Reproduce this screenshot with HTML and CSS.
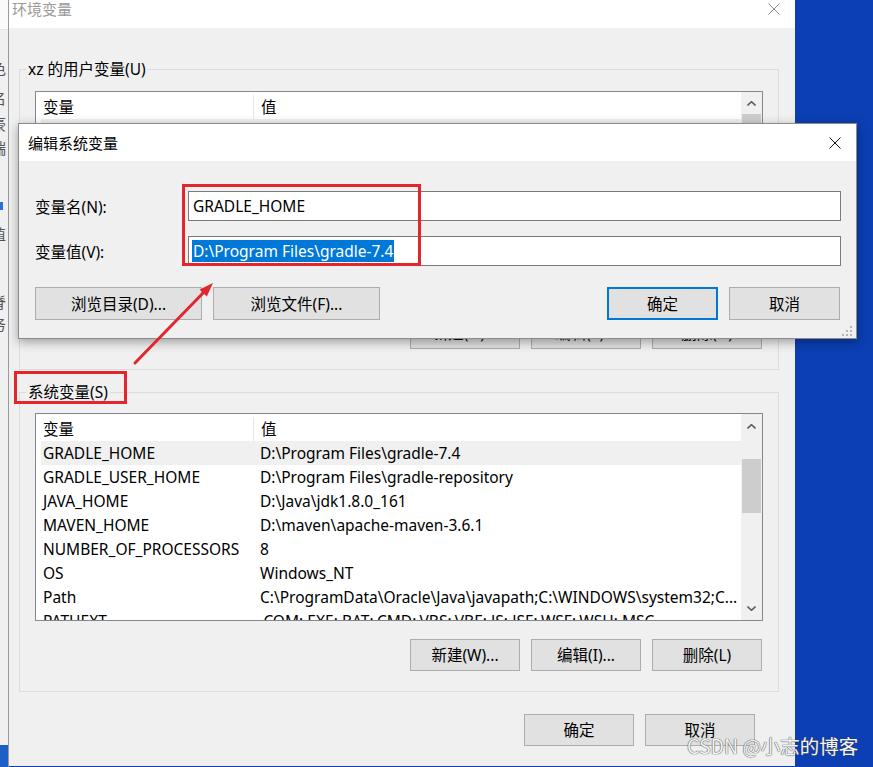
FILE: index.html
```html
<!DOCTYPE html>
<html lang="zh-CN">
<head>
<meta charset="utf-8">
<title>环境变量</title>
<link rel="stylesheet" href="styles.css">
</head>
<body>
<div class="screen">
  <div class="behind">
    <div class="behind-top"></div>
    <span class="frag fr1">色</span>
    <span class="frag fr2">名</span>
    <span class="frag fr3">豪</span>
    <span class="frag fr4">瑞</span>
    <span class="frag-blue"></span>
    <span class="frag fr5">值</span>
    <span class="frag fr6">脊</span>
    <span class="frag fr7">务</span>
    <div class="behind-fill"></div>
    <div class="behind-blue"></div>
  </div>

  <div class="envwin">
    <div class="titlebar">
      <span class="title">环境变量</span>
      <svg class="close-x gray" width="12" height="12" viewBox="0 0 12 12"><path d="M0.5 0.5 L11.5 11.5 M11.5 0.5 L0.5 11.5"/></svg>
    </div>
    <div class="winbody">
      <fieldset class="group">
        <legend>xz 的用户变量(U)</legend>
        <div class="listview">
          <div class="lv-main">
            <div class="lv-head"><span class="c1">变量</span><span class="c2">值</span></div>
            <div class="lv-row sel"><span class="c1">OneDrive</span><span class="c2">C:\Users\xz\OneDrive</span></div>
            <div class="lv-row"><span class="c1">Path</span><span class="c2">C:\Users\xz\AppData\Local\Microsoft\WindowsApps;</span></div>
            <div class="lv-row"><span class="c1">TEMP</span><span class="c2">C:\Users\xz\AppData\Local\Temp</span></div>
            <div class="lv-row"><span class="c1">TMP</span><span class="c2">C:\Users\xz\AppData\Local\Temp</span></div>
          </div>
          <div class="lv-scroll">
            <div class="sb-arrow up-user"><svg width="9" height="5" viewBox="0 0 9 5"><polyline points="0.5,4.5 4.5,0.7 8.5,4.5"/></svg></div>
            <div class="sb-thumb user-thumb"></div>
            <div class="sb-space"></div>
            <div class="sb-arrow"><svg width="9" height="5" viewBox="0 0 9 5"><polyline points="0.5,0.5 4.5,4.3 8.5,0.5"/></svg></div>
          </div>
        </div>
        <div class="btnrow">
          <button class="btn">新建(N)...</button>
          <button class="btn">编辑(E)...</button>
          <button class="btn">删除(D)</button>
        </div>
      </fieldset>

      <fieldset class="group sys">
        <legend>系统变量(S)</legend>
        <div class="listview">
          <div class="lv-main">
            <div class="lv-head"><span class="c1">变量</span><span class="c2">值</span></div>
            <div class="lv-row sel"><span class="c1">GRADLE_HOME</span><span class="c2">D:\Program Files\gradle-7.4</span></div>
            <div class="lv-row"><span class="c1">GRADLE_USER_HOME</span><span class="c2">D:\Program Files\gradle-repository</span></div>
            <div class="lv-row"><span class="c1">JAVA_HOME</span><span class="c2">D:\Java\jdk1.8.0_161</span></div>
            <div class="lv-row"><span class="c1">MAVEN_HOME</span><span class="c2">D:\maven\apache-maven-3.6.1</span></div>
            <div class="lv-row"><span class="c1">NUMBER_OF_PROCESSORS</span><span class="c2">8</span></div>
            <div class="lv-row"><span class="c1">OS</span><span class="c2">Windows_NT</span></div>
            <div class="lv-row"><span class="c1">Path</span><span class="c2">C:\ProgramData\Oracle\Java\javapath;C:\WINDOWS\system32;C...</span></div>
            <div class="lv-row"><span class="c1">PATHEXT</span><span class="c2">.COM;.EXE;.BAT;.CMD;.VBS;.VBE;.JS;.JSE;.WSF;.WSH;.MSC</span></div>
          </div>
          <div class="lv-scroll">
            <div class="sb-arrow"><svg width="9" height="5" viewBox="0 0 9 5"><polyline points="0.5,4.5 4.5,0.7 8.5,4.5"/></svg></div>
            <div class="sb-thumb sys-thumb"></div>
            <div class="sb-space"></div>
            <div class="sb-arrow"><svg width="9" height="5" viewBox="0 0 9 5"><polyline points="0.5,0.5 4.5,4.3 8.5,0.5"/></svg></div>
          </div>
        </div>
        <div class="btnrow">
          <button class="btn">新建(W)...</button>
          <button class="btn">编辑(I)...</button>
          <button class="btn">删除(L)</button>
        </div>
      </fieldset>

      <div class="footer">
        <button class="btn">确定</button>
        <button class="btn">取消</button>
      </div>
    </div>
  </div>

  <div class="desktop"></div>
</div>

<div class="dialog">
  <div class="dlg-title">
    <span>编辑系统变量</span>
    <svg class="close-x" width="12" height="12" viewBox="0 0 12 12"><path d="M0.5 0.5 L11.5 11.5 M11.5 0.5 L0.5 11.5"/></svg>
  </div>
  <div class="dlg-body">
    <div class="field">
      <label class="field-label">变量名(N):</label>
      <div class="input">GRADLE_HOME</div>
    </div>
    <div class="field second">
      <label class="field-label">变量值(V):</label>
      <div class="input"><span class="selected">D:\Program Files\gradle-7.4</span></div>
    </div>
    <div class="dlg-buttons">
      <button class="btn wide">浏览目录(D)...</button>
      <button class="btn wide">浏览文件(F)...</button>
      <div class="spacer"></div>
      <button class="btn mid default">确定</button>
      <button class="btn mid">取消</button>
    </div>
  </div>
  <svg class="grip" width="12" height="12" viewBox="0 0 12 12">
    <rect x="9" y="1" width="2" height="2"/>
    <rect x="5" y="5" width="2" height="2"/>
    <rect x="9" y="5" width="2" height="2"/>
    <rect x="1" y="9" width="2" height="2"/>
    <rect x="5" y="9" width="2" height="2"/>
    <rect x="9" y="9" width="2" height="2"/>
  </svg>
</div>

<div class="redbox box-input"></div>
<div class="redbox box-label"></div>
<svg class="arrow" width="110" height="110" viewBox="0 0 110 110">
  <line x1="15" y1="93" x2="84" y2="22"/>
  <polygon points="93,13 86.8,26.5 79.6,19.5"/>
</svg>

<div class="watermark">CSDN @小志的博客</div>
</body>
</html>
```

FILE: styles.css
```css
* { box-sizing: border-box; }

html, body {
  margin: 0;
  padding: 0;
}

body {
  width: 873px;
  height: 767px;
  overflow: hidden;
  position: relative;
  font-family: "Noto Sans", "Noto Sans CJK SC", sans-serif;
  font-size: 15.5px;
  color: #000;
  background: #0b3fb3;
}

.screen {
  display: flex;
  width: 873px;
  height: 767px;
  overflow: hidden;
  background: #0b3fb3;
}

/* sliver of another window at the far left */
.behind {
  width: 9px;
  flex: none;
  display: flex;
  flex-direction: column;
  overflow: hidden;
  background: #f0f0f0;
  border-right: 1px solid #9a9a9a;
}
.behind-top { height: 30px; background: #fafafa; border-bottom: 1px solid #e3e3e3; flex: none; }
.frag {
  display: block;
  flex: none;
  margin-left: -9px;
  font-family: "Noto Sans CJK SC", sans-serif;
  font-size: 15px;
  line-height: 20px;
  color: #555;
}
.fr1 { margin-top: 28px; }
.fr2 { margin-top: 10px; }
.fr3 { margin-top: 6px; }
.fr4 { margin-top: 4px; }
.frag-blue { display: block; flex: none; width: 3px; height: 8px; margin-top: 44px; background: #2d6fd2; }
.fr5 { margin-top: 14px; }
.fr6 { margin-top: 48px; }
.fr7 { margin-top: 2px; }
.behind-fill { flex: 1; }
.behind-blue { height: 22px; flex: none; background: #1c5fc6; }

/* main window */
.envwin {
  width: 786px;
  height: 766px;
  flex: none;
  display: flex;
  flex-direction: column;
  background: #f0f0f0;
}

.titlebar {
  height: 28px;
  flex: none;
  background: #fff;
  display: flex;
  justify-content: space-between;
  align-items: flex-start;
  padding: 0 15px 0 3px;
}
.title {
  font-family: "Noto Sans CJK SC", sans-serif;
  font-size: 15px;
  line-height: 18px;
  color: #9a9a9a;
}
.close-x { margin-top: 3px; }
.close-x path { stroke: #111; stroke-width: 1; fill: none; }
.close-x.gray path { stroke: #8a8a8a; }

.winbody {
  flex: 1;
  padding: 31px 16px 0 10px;
}

.group {
  margin: 0;
  min-width: 0;
  border: 1px solid #dcdcdc;
  padding: 0 15px 20px 15px;
}
.group legend {
  margin-left: -9px;
  padding: 0 2px;
  line-height: 20px;
}
.group.sys { margin-top: 12px; }

.listview {
  display: flex;
  height: 208px;
  margin-top: 12px;
  border: 1px solid #828790;
  background: #fff;
  overflow: hidden;
}
.sys .listview { margin-top: 11px; }

.lv-main {
  flex: 1;
  min-width: 0;
  overflow: hidden;
}
.lv-head {
  display: flex;
  height: 27px;
  padding-top: 3px;
  align-items: center;
}
.lv-head .c1 { border-right: 1px solid #e5e5e5; height: 24px; }
.lv-row {
  display: flex;
  height: 24px;
  align-items: center;
  white-space: nowrap;
}
.c1 {
  width: 218px;
  flex: none;
  padding-left: 7px;
  line-height: 24px;
  white-space: nowrap;
  overflow: hidden;
}
.c2 {
  padding-left: 7px;
  line-height: 24px;
  white-space: nowrap;
}
.lv-row .c2 { padding-left: 6px; }
.lv-row.sel { background: #f0f0f0; margin-left: 5px; }
.lv-row.sel .c1 { width: 213px; padding-left: 2px; }

.lv-scroll {
  width: 21px;
  flex: none;
  display: flex;
  flex-direction: column;
  background: #f0f0f0;
}
.sb-arrow {
  height: 24px;
  flex: none;
  display: flex;
  align-items: center;
  justify-content: center;
}
.sb-arrow polyline { fill: none; stroke: #606060; stroke-width: 1.6; }
.sb-thumb { flex: none; margin: 0 1px; background: #cdcdcd; }
.up-user { height: 22px; }
.user-thumb { height: 54px; }
.sys-thumb { margin-top: 21px; height: 54px; }
.sb-space { flex: 1; }

.btnrow {
  display: flex;
  justify-content: flex-end;
  gap: 11px;
  margin-top: 18px;
  padding-right: 1px;
}

.btn {
  width: 110px;
  height: 32px;
  margin: 0;
  padding: 0;
  border: 1px solid #adadad;
  background: #e1e1e1;
  font-family: "Noto Sans", "Noto Sans CJK SC", sans-serif;
  font-size: 15.5px;
  color: #000;
  line-height: 28px;
}

.footer {
  display: flex;
  justify-content: flex-end;
  gap: 11px;
  margin-top: 22px;
  padding-right: 24px;
}

.desktop {
  flex: 1;
  background: #0b3fb3;
}

/* edit dialog on top */
.dialog {
  position: absolute;
  left: 18px;
  top: 123px;
  width: 839px;
  height: 216px;
  border: 1px solid #8c8c8c;
  background: #f0f0f0;
  box-shadow: 0 3px 10px rgba(0, 0, 0, 0.35);
  display: flex;
  flex-direction: column;
}
.dlg-title {
  height: 37px;
  flex: none;
  background: #fff;
  display: flex;
  align-items: center;
  justify-content: space-between;
  padding: 0 15px 0 9px;
  font-family: "Noto Sans CJK SC", sans-serif;
  font-size: 15px;
}
.dlg-title .close-x { margin-top: 0; }

.dlg-body {
  padding: 30px 15px 0 16px;
}
.field {
  display: flex;
  align-items: center;
  height: 30px;
}
.field.second { margin-top: 15px; }
.field-label {
  width: 153px;
  flex: none;
}
.input {
  flex: 1;
  height: 30px;
  border: 1px solid #7a7a7a;
  background: #fff;
  padding-left: 4px;
  display: flex;
  align-items: center;
  white-space: nowrap;
}
.selected {
  background: #0078d7;
  color: #fff;
  line-height: 22px;
  margin-left: -1px;
  padding: 0 1px;
}

.dlg-buttons {
  display: flex;
  gap: 11px;
  margin-top: 21px;
  padding-right: 1px;
}
.dlg-buttons .spacer { flex: 1; }
.btn.wide { width: 167px; height: 33px; }
.btn.mid { width: 111px; height: 33px; }
.btn.default { border: 2px solid #0078d7; }

.grip {
  position: absolute;
  right: 3px;
  bottom: 1px;
}
.grip rect { fill: #b5b5b5; }

/* annotation overlays */
.redbox {
  position: absolute;
  border: 3px solid #e3262e;
}
.box-input { left: 182px; top: 184px; width: 239px; height: 82px; }
.box-label { left: 14px; top: 371px; width: 113px; height: 33px; }

.arrow {
  position: absolute;
  left: 120px;
  top: 270px;
}
.arrow line { stroke: #e3262e; stroke-width: 3; stroke-linecap: round; }
.arrow polygon { fill: #e3262e; }

.watermark {
  position: absolute;
  left: 687px;
  top: 733px;
  font-family: "Noto Sans CJK SC", sans-serif;
  font-size: 19.5px;
  line-height: 26px;
  color: #f4f4f4;
  text-shadow: 0 0 1px #444, 0 0 1px #444;
  white-space: nowrap;
}
```
